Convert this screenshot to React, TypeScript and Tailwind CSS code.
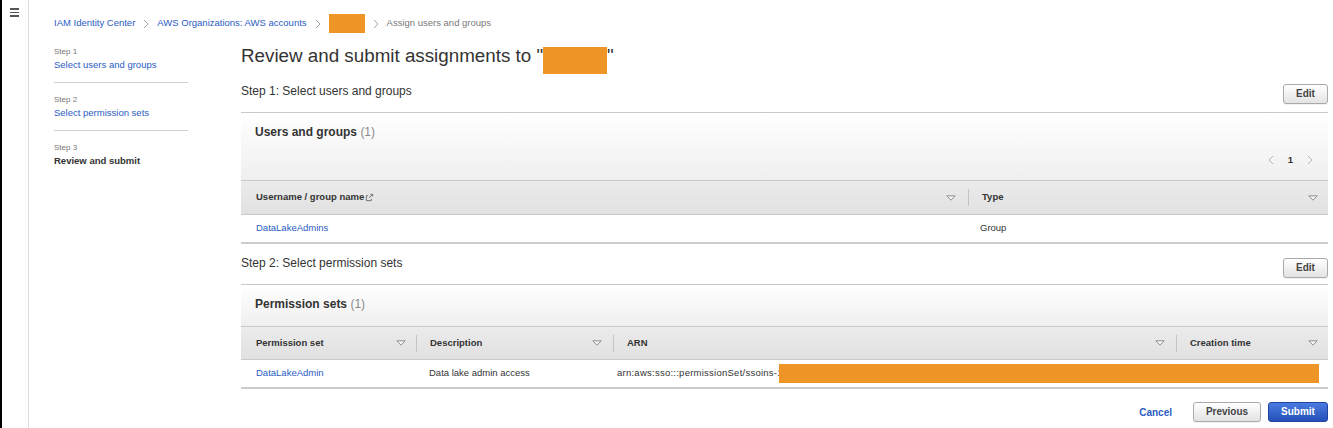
import React from 'react';

const LINK = 'text-[#2a5cc3]';

const Crumb = () => (
    <svg width="6" height="10" viewBox="0 0 6 10" className="mx-[8px] shrink-0">
        <path d="M1 1l4 4-4 4" fill="none" stroke="#a3a3a3" strokeWidth="1" />
    </svg>
);

const Tri = () => (
    <svg width="10" height="6" viewBox="0 0 10 6" className="shrink-0">
        <path d="M0.8 0.8H9.2L5 5.2Z" fill="#f4f4f4" stroke="#8f8f8f" strokeWidth="1" strokeLinejoin="round" />
    </svg>
);

const Sep = () => <div className="w-px h-[17px] bg-[#c4c4c4] shrink-0" />;

const ExtLink = () => (
    <svg width="9" height="9" viewBox="0 0 10 10" className="ml-[1px] shrink-0">
        <path d="M6 1.5h2.5V4M8.5 1.5L4.5 5.5M7 6.5v2H1.5V3h2" fill="none" stroke="#666" strokeWidth="1" />
    </svg>
);

const GrayButton = ({ label, w }: { label: string; w: string }) => (
    <button className={`${w} h-[20px] rounded-[3px] border border-[#a9a9a9] bg-linear-to-b from-white to-[#e3e3e3] text-[10px] leading-none font-bold text-[#444] shadow-[0_1px_0_rgba(0,0,0,0.05)]`}>
        {label}
    </button>
);

const PanelTitle = ({ title }: { title: string }) => (
    <div className="pl-[14px] text-[12px] leading-[16px] font-bold text-[#333]">
        {title} <span className="font-normal text-[#8a8a8a]">(1)</span>
    </div>
);

const App: React.FC = () => {
    return (
        <div className="flex w-[1333px] h-[428px] overflow-hidden bg-white text-[#333] [font-family:'Liberation_Sans',Arial,sans-serif]">
            {/* Side rail */}
            <div className="w-[29px] shrink-0 border-l-2 border-l-black border-r border-r-[#dddddd] pl-[8px] pt-[8px]">
                <div className="flex flex-col gap-[2px] w-[9px]">
                    <span className="h-[1.5px] bg-[#555]" />
                    <span className="h-[1.5px] bg-[#555]" />
                    <span className="h-[1.5px] bg-[#555]" />
                </div>
            </div>

            <div className="flex-1 pl-[25px] pr-[5px]">
                {/* Breadcrumb */}
                <div className="mt-[14px] h-[19px] flex items-center text-[9.5px]">
                    <span className={LINK}>IAM Identity Center</span>
                    <Crumb />
                    <span className={LINK}>AWS Organizations: AWS accounts</span>
                    <Crumb />
                    <span className="w-[36px] h-[19px] bg-[#ef9427]" />
                    <Crumb />
                    <span className="text-[#7a7a7a]">Assign users and groups</span>
                </div>

                <div className="flex">
                    {/* Wizard steps */}
                    <div className="w-[134px] shrink-0 pt-[13px]">
                        <div className="pb-[10px] border-b border-[#d0d0d0]">
                            <div className="text-[8px] leading-[12px] text-[#777]">Step 1</div>
                            <div className={`text-[9.5px] leading-[14px] ${LINK}`}>Select users and groups</div>
                        </div>
                        <div className="pt-[11px] pb-[10px] border-b border-[#d0d0d0]">
                            <div className="text-[8px] leading-[12px] text-[#777]">Step 2</div>
                            <div className={`text-[9.5px] leading-[14px] ${LINK}`}>Select permission sets</div>
                        </div>
                        <div className="pt-[11px]">
                            <div className="text-[8px] leading-[12px] text-[#777]">Step 3</div>
                            <div className="text-[9.5px] leading-[14px] font-bold text-[#333]">Review and submit</div>
                        </div>
                    </div>

                    {/* Main */}
                    <div className="ml-[53px] flex-1 min-w-0">
                        <div className="mt-[9px] flex items-start text-[18.8px] leading-[28px] text-[#333]">
                            <span>Review and submit assignments to "</span>
                            <span className="mt-[5px] w-[64px] h-[27px] bg-[#ef9427]" />
                            <span>"</span>
                        </div>

                        {/* Step 1 */}
                        <div className="mt-[9px] flex items-start justify-between">
                            <div className="text-[12px] leading-[16px]">Step 1: Select users and groups</div>
                            <div className="mt-[1px] flex"><GrayButton label="Edit" w="w-[45px]" /></div>
                        </div>

                        <div className="mt-[8px]">
                            <div className="border-t border-[#c9c9c9] bg-linear-to-b from-white to-[#efefef] pt-[11px] pb-[12px]">
                                <PanelTitle title="Users and groups" />
                                <div className="mt-[12px] h-[16px] flex items-center justify-end pr-[15px] gap-[14px]">
                                    <svg width="6" height="10" viewBox="0 0 6 10"><path d="M5 1L1 5l4 4" fill="none" stroke="#b5b5b5" strokeWidth="1" /></svg>
                                    <span className="text-[9.5px] font-bold text-[#333]">1</span>
                                    <svg width="6" height="10" viewBox="0 0 6 10"><path d="M1 1l4 4-4 4" fill="none" stroke="#b5b5b5" strokeWidth="1" /></svg>
                                </div>
                            </div>
                            <div className="flex h-[35px] border-y border-[#c9c9c9] bg-linear-to-b from-[#ebebeb] to-[#e1e1e1] text-[9.5px] font-bold text-[#333]">
                                <div className="w-[728px] shrink-0 flex items-center pl-[15px]">
                                    <span>Username / group name</span>
                                    <ExtLink />
                                    <span className="flex-1" />
                                    <Tri />
                                    <span className="w-[12px]" />
                                    <Sep />
                                </div>
                                <div className="flex-1 flex items-center pl-[13px] pr-[10px]">
                                    <span className="flex-1">Type</span>
                                    <Tri />
                                </div>
                            </div>
                            <div className="flex h-[29px] items-center border-b-2 border-[#cccccc] text-[9.5px]">
                                <div className={`w-[728px] shrink-0 pl-[15px] ${LINK}`}>DataLakeAdmins</div>
                                <div className="flex-1 pl-[11px] text-[#333]">Group</div>
                            </div>
                        </div>

                        {/* Step 2 */}
                        <div className="mt-[11px] flex items-start justify-between">
                            <div className="text-[12px] leading-[16px]">Step 2: Select permission sets</div>
                            <div className="mt-[3px] flex"><GrayButton label="Edit" w="w-[45px]" /></div>
                        </div>

                        <div className="mt-[6px]">
                            <div className="border-t border-[#c9c9c9] bg-linear-to-b from-white to-[#efefef] pt-[11px] pb-[14px]">
                                <PanelTitle title="Permission sets" />
                            </div>
                            <div className="flex h-[34px] border-y border-[#c9c9c9] bg-linear-to-b from-[#ebebeb] to-[#e1e1e1] text-[9.5px] font-bold text-[#333]">
                                <div className="w-[176px] shrink-0 flex items-center pl-[15px]">
                                    <span className="flex-1">Permission set</span>
                                    <Tri />
                                    <span className="w-[10px]" />
                                    <Sep />
                                </div>
                                <div className="w-[197px] shrink-0 flex items-center pl-[13px]">
                                    <span className="flex-1">Description</span>
                                    <Tri />
                                    <span className="w-[11px]" />
                                    <Sep />
                                </div>
                                <div className="w-[563px] shrink-0 flex items-center pl-[13px]">
                                    <span className="flex-1">ARN</span>
                                    <Tri />
                                    <span className="w-[11px]" />
                                    <Sep />
                                </div>
                                <div className="flex-1 flex items-center pl-[13px] pr-[10px]">
                                    <span className="flex-1">Creation time</span>
                                    <Tri />
                                </div>
                            </div>
                            <div className="flex h-[29px] items-center border-b-2 border-[#cccccc] text-[9.5px] text-[#333]">
                                <div className={`w-[176px] shrink-0 pl-[15px] ${LINK}`}>DataLakeAdmin</div>
                                <div className="w-[197px] shrink-0 pl-[12px]">Data lake admin access</div>
                                <div className="flex-1 flex items-center pl-[3px]">
                                    <span className="tracking-[0.25px] whitespace-nowrap">arn:aws:sso:::permissionSet/ssoins-1</span>
                                    <span className="-ml-[4px] flex-1 mr-[9px] h-[19px] bg-[#ef9427]" />
                                </div>
                            </div>
                        </div>

                        {/* Footer */}
                        <div className="mt-[13px] flex items-center justify-end">
                            <span className={`text-[10px] font-bold ${LINK}`}>Cancel</span>
                            <span className="w-[21px]" />
                            <GrayButton label="Previous" w="w-[68px]" />
                            <span className="w-[7px]" />
                            <button className="w-[60px] h-[20px] rounded-[3px] border border-[#1e43a0] bg-linear-to-b from-[#4a7be0] to-[#2550b9] text-[10px] leading-none font-bold text-white">
                                Submit
                            </button>
                        </div>
                    </div>
                </div>
            </div>
        </div>
    );
};

export default App;
